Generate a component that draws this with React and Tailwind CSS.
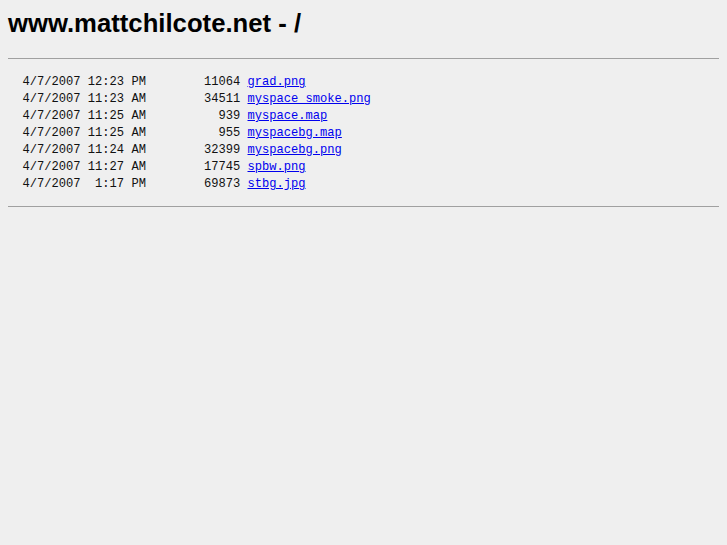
const files = [
  ['4/7/2007 12:23 PM', '11064', 'grad.png'],
  ['4/7/2007 11:23 AM', '34511', 'myspace_smoke.png'],
  ['4/7/2007 11:25 AM', '939', 'myspace.map'],
  ['4/7/2007 11:25 AM', '955', 'myspacebg.map'],
  ['4/7/2007 11:24 AM', '32399', 'myspacebg.png'],
  ['4/7/2007 11:27 AM', '17745', 'spbw.png'],
  ['4/7/2007  1:17 PM', '69873', 'stbg.jpg'],
];

export default function App() {
  return (
    <div className="min-h-screen bg-[#efefef] px-2 pt-[9px] text-black">
      <h1 className="font-['Liberation_Sans',Arial,sans-serif] text-[25.7px] font-bold leading-[29px]">
        www.mattchilcote.net - /
      </h1>
      <div className="mt-[20px] h-px bg-[#a0a0a0]" />
      <pre className="mt-[15px] font-['Liberation_Mono','Courier_New',monospace] text-[12.1px] leading-[17px] text-[#111]">
        {files.map(([date, size, name]) => (
          <div key={name}>
            {'  ' + date + size.padStart(13, ' ') + ' '}
            <a href="#" className="text-[#0000ee] underline">{name}</a>
          </div>
        ))}
      </pre>
      <div className="mt-[13px] h-px bg-[#a0a0a0]" />
    </div>
  );
}
